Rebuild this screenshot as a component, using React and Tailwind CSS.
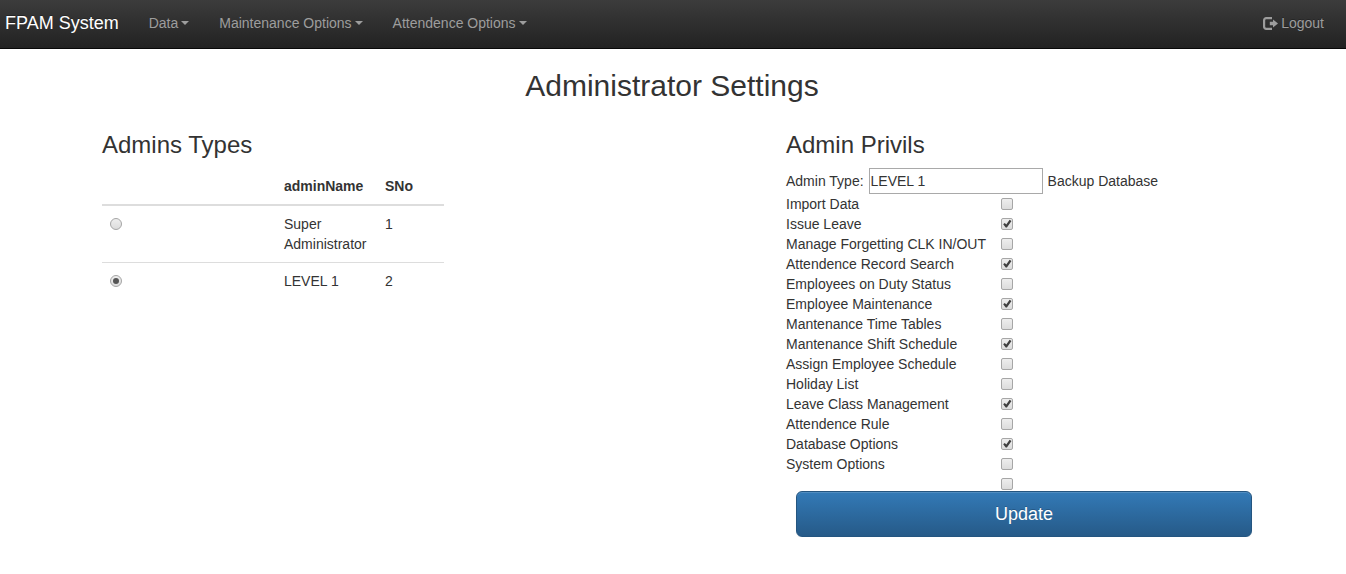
import { useState } from "react";

const MENUS = ["Data", "Maintenance Options", "Attendence Options"];

const ADMINS = [
  { id: 1, name: "Super Administrator" },
  { id: 2, name: "LEVEL 1" },
];

const PRIVILEGES = [
  { id: "backup", label: "Backup Database", on: false },
  { id: "import", label: "Import Data", on: true },
  { id: "leave", label: "Issue Leave", on: false },
  { id: "forgetting", label: "Manage Forgetting CLK IN/OUT", on: true },
  { id: "search", label: "Attendence Record Search", on: false },
  { id: "duty", label: "Employees on Duty Status", on: true },
  { id: "employee", label: "Employee Maintenance", on: false },
  { id: "timetables", label: "Mantenance Time Tables", on: true },
  { id: "shift", label: "Mantenance Shift Schedule", on: false },
  { id: "assign", label: "Assign Employee Schedule", on: false },
  { id: "holiday", label: "Holiday List", on: true },
  { id: "class", label: "Leave Class Management", on: false },
  { id: "rule", label: "Attendence Rule", on: true },
  { id: "database", label: "Database Options", on: false },
  { id: "system", label: "System Options", on: false },
];

function Caret() {
  return (
    <svg className="ml-[3px] h-1 w-2" viewBox="0 0 8 4" fill="currentColor" aria-hidden="true">
      <path d="M0 0h8L4 4z" />
    </svg>
  );
}

function LogoutIcon() {
  return (
    <svg className="mr-[3px] h-[13px] w-[15px]" viewBox="0 0 15 13" aria-hidden="true">
      <path d="M9 1.1H3.2A2.100 2.100 0 0 0 1.100 3.200v6.600a2.100 2.100 0 0 0 2.100 2.100H9" fill="none" stroke="currentColor" strokeWidth="2.2" />
      <path d="M10 2.600 15 6.500l-5 3.900V8.300H6.800V4.700H10z" fill="currentColor" />
    </svg>
  );
}

function Navbar() {
  return (
    <nav className="flex flex-wrap items-center justify-between border-b border-[#080808] bg-gradient-to-b from-[#3c3c3c] to-[#222222] pt-[13px] pb-[15px] pr-[22px] pl-[5px] leading-5 text-[#9d9d9d] [text-shadow:0_-1px_0_rgba(0,0,0,0.25)]">
      <div className="flex flex-wrap items-center gap-[30px]">
        <a href="#home" className="text-lg leading-5 text-white">FPAM System</a>
        {MENUS.map((menu) => (
          <button key={menu} type="button" className="flex items-center">
            {menu}
            <Caret />
          </button>
        ))}
      </div>
      <a href="#logout" className="flex items-center">
        <LogoutIcon />
        Logout
      </a>
    </nav>
  );
}

function Radio({ label, checked, onChange }) {
  return (
    <span className="grid h-5 w-4 place-items-center justify-start">
      <input
        type="radio"
        name="admin"
        aria-label={label}
        checked={checked}
        onChange={onChange}
        className="col-start-1 row-start-1 h-3 w-3 appearance-none rounded-full border border-[#a6a6a6] bg-gradient-to-b from-[#eeeeee] to-[#dcdcdc]"
      />
      {checked && <span className="pointer-events-none col-start-1 row-start-1 h-1.5 w-1.5 rounded-full bg-[#555555]" />}
    </span>
  );
}

function Checkbox({ id, checked, onChange }) {
  return (
    <span className="grid h-[13px] w-[13px] place-items-start">
      <input
        id={id}
        type="checkbox"
        checked={checked}
        onChange={onChange}
        className="col-start-1 row-start-1 h-3 w-3 appearance-none rounded-xs border border-[#a6a6a6] bg-gradient-to-b from-[#eeeeee] to-[#dcdcdc]"
      />
      {checked && (
        <svg className="pointer-events-none col-start-1 row-start-1 h-3 w-3" viewBox="0 0 12 12" fill="#404040" aria-hidden="true">
          <path d="M2.200 6.300 3.800 5l1.500 1.600L8.600 1.800l1.900 1.300-4.600 6.500H4.700z" />
        </svg>
      )}
    </span>
  );
}

function AdminTable() {
  const [selected, setSelected] = useState(2);
  return (
    <table className="w-1/2 table-fixed border-collapse text-left">
      <colgroup>
        <col className="w-[174px]" />
        <col className="w-[101px]" />
        <col />
      </colgroup>
      <thead>
        <tr className="border-b-2 border-[#dddddd]">
          <th className="p-2"></th>
          <th className="p-2">adminName</th>
          <th className="p-2">SNo</th>
        </tr>
      </thead>
      <tbody>
        {ADMINS.map((admin) => (
          <tr key={admin.id} className="border-b border-[#dddddd] align-top last:border-b-0">
            <td className="p-2">
              <Radio label={admin.name} checked={selected === admin.id} onChange={() => setSelected(admin.id)} />
            </td>
            <td className="p-2">{admin.name}</td>
            <td className="p-2">{admin.id}</td>
          </tr>
        ))}
      </tbody>
    </table>
  );
}

function PrivilegeForm() {
  const [items, setItems] = useState(PRIVILEGES);
  const toggle = (id) => setItems(items.map((p) => (p.id === id ? { ...p, on: !p.on } : p)));
  const [first, ...rest] = items;
  return (
    <form onSubmit={(e) => e.preventDefault()}>
      <div className="flex items-center gap-[5px]">
        <label htmlFor="adminType">Admin Type:</label>
        <input id="adminType" type="text" defaultValue="LEVEL 1" className="h-[26px] w-[174px] border border-[#a9a9a9] bg-white px-px" />
        <label htmlFor={first.id}>{first.label}</label>
      </div>
      <div className="flex">
        <div className="flex w-[215px] flex-col items-start">
          {rest.map((p) => (
            <label key={p.id} htmlFor={p.id}>{p.label}</label>
          ))}
        </div>
        <div className="flex flex-col gap-[7px] pt-1">
          {items.map((p) => (
            <Checkbox key={p.id} id={p.id} checked={p.on} onChange={() => toggle(p.id)} />
          ))}
        </div>
      </div>
      <div className="-mr-2.5 pl-2.5">
        <button type="submit" className="w-full rounded-md border border-[#245580] bg-gradient-to-b from-[#337ab7] to-[#265a88] py-2.5 text-lg leading-6 text-white shadow-[inset_0_1px_0_rgba(255,255,255,0.15),0_1px_1px_rgba(0,0,0,0.075)] [text-shadow:0_-1px_0_rgba(0,0,0,0.2)]">
          Update
        </button>
      </div>
    </form>
  );
}

export default function App() {
  return (
    <div className="bg-white font-['Liberation_Sans',Arial,sans-serif] text-sm leading-5 text-[#333333]">
      <Navbar />
      <main className="pr-0.5">
        <div className="mx-auto max-w-[1140px]">
          <h1 className="pt-5 text-center text-3xl leading-[33px]">Administrator Settings</h1>
          <div className="flex pt-[30px]">
            <section className="w-3/5">
              <h2 className="pb-2.5 text-2xl leading-[26px]">Admins Types</h2>
              <AdminTable />
            </section>
            <section className="w-2/5">
              <h2 className="pb-2.5 text-2xl leading-[26px]">Admin Privils</h2>
              <PrivilegeForm />
            </section>
          </div>
        </div>
      </main>
    </div>
  );
}
